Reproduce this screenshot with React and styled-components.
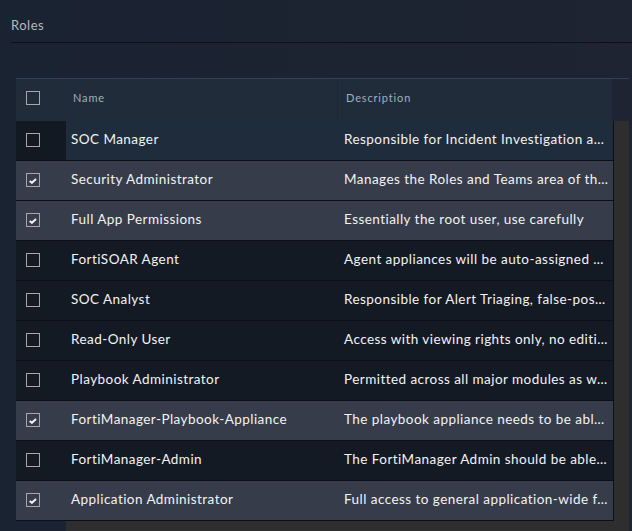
import React from "react";
import styled, { createGlobalStyle } from "styled-components";

const Global = createGlobalStyle`
  html, body { margin: 0; padding: 0; height: 100%; background: #1d2431; }
  body { font-family: Lato, "Liberation Sans", sans-serif; overflow: hidden; }
`;

const Page = styled.div`
  width: 632px;
  height: 531px;
  overflow: hidden;
  background: linear-gradient(90deg, #1a2332 0%, #1e2431 100%);
`;

const Title = styled.div`
  margin-left: 11px;
  height: 43px;
  box-sizing: border-box;
  padding-top: 17px;
  line-height: 17px;
  font-size: 13px;
  letter-spacing: 0.5px;
  color: #b4b8bd;
  border-bottom: 1px solid #0d1017;
`;

const Panel = styled.div`
  margin: 35px 3px 0 16px;
  border-top: 1px solid #2f4258;
`;

const Head = styled.div`
  display: grid;
  grid-template-columns: 50px 271px 1fr;
  height: 42px;
  margin-right: 17px;
  background: #212c3a;
  align-items: center;
`;

const HeadCheck = styled.div`
  display: flex;
  align-items: center;
  padding: 0 0 4px 10px;
  height: 100%;
  box-sizing: border-box;
`;

const HeadCell = styled.div`
  height: 100%;
  display: flex;
  align-items: center;
  box-sizing: border-box;
  padding: 0 0 6px ${p => p.$pad}px;
  border-left: ${p => (p.$divider ? "1px solid #1c2633" : "0")};
  font-size: 11px;
  letter-spacing: 0.85px;
  color: #9fb0c0;
`;

const Body = styled.div`
  display: grid;
  grid-template-columns: 598px 15px;
  background: #2e2e2e;
`;

const Rows = styled.div`
  display: flex;
  flex-direction: column;
  border-right: 1px solid #0c1016;
`;

const Track = styled.div`
  background: #2e2e2e;
`;

const Row = styled.div`
  display: grid;
  grid-template-columns: 50px 273px 274px;
  height: 40px;
  box-sizing: border-box;
  border-bottom: 1px solid #0c1016;
  align-items: center;
  background: ${p => p.$bg};
`;

const RowCheck = styled.div`
  display: flex;
  align-items: center;
  box-sizing: border-box;
  padding: 0 0 1px 10px;
  height: 100%;
  background: ${p => p.$bg || "transparent"};
`;

const Cell = styled.div`
  font-size: 13.5px;
  letter-spacing: 0.45px;
  color: #f2f3f5;
  padding: 0 0 4px ${p => p.$pad}px;
  white-space: nowrap;
`;

const Box = styled.span`
  display: block;
  width: 14px;
  height: 14px;
  box-sizing: border-box;
  border: 1px solid #a4a8ad;
  svg { display: block; margin: 4px 0 0 2px; }
`;

const Foot = styled.div`
  display: flex;
  height: 10px;
`;

const FootGutter = styled.div`
  width: 50px;
`;

const FootFill = styled.div`
  flex: 1;
  background: #2e2e2e;
`;

const Check = ({ on }) => (
  <Box>
    {on && (
      <svg width="8" height="6" viewBox="0 0 8 6">
        <path d="M0.7 3 L2.9 4.8 L7 1" fill="none" stroke="#f4f4f4" strokeWidth="2" />
      </svg>
    )}
  </Box>
);

const data = [
  ["SOC Manager", "Responsible for Incident Investigation a…", "first"],
  ["Security Administrator", "Manages the Roles and Teams area of th…", "on"],
  ["Full App Permissions", "Essentially the root user, use carefully", "on"],
  ["FortiSOAR Agent", "Agent appliances will be auto-assigned …", ""],
  ["SOC Analyst", "Responsible for Alert Triaging, false-pos…", ""],
  ["Read-Only User", "Access with viewing rights only, no editi…", ""],
  ["Playbook Administrator", "Permitted across all major modules as w…", ""],
  ["FortiManager-Playbook-Appliance", "The playbook appliance needs to be abl…", "on"],
  ["FortiManager-Admin", "The FortiManager Admin should be able…", ""],
  ["Application Administrator", "Full access to general application-wide f…", "on"],
];

const rowBg = k => (k === "on" ? "#363c4a" : k === "first" ? "#1f2c3c" : "#141a24");

export default function App() {
  return (
    <Page>
      <Global />
      <Title>Roles</Title>
      <Panel>
        <Head>
          <HeadCheck><Check /></HeadCheck>
          <HeadCell $pad={7}>Name</HeadCell>
          <HeadCell $pad={8} $divider>Description</HeadCell>
        </Head>
        <Body>
          <Rows>
            {data.map(([name, desc, kind]) => (
              <Row key={name} $bg={rowBg(kind)}>
                <RowCheck $bg={kind === "first" ? "#121922" : undefined}><Check on={kind === "on"} /></RowCheck>
                <Cell $pad={5}>{name}</Cell>
                <Cell $pad={5}>{desc}</Cell>
              </Row>
            ))}
          </Rows>
          <Track />
        </Body>
        <Foot>
          <FootGutter />
          <FootFill />
        </Foot>
      </Panel>
    </Page>
  );
}
